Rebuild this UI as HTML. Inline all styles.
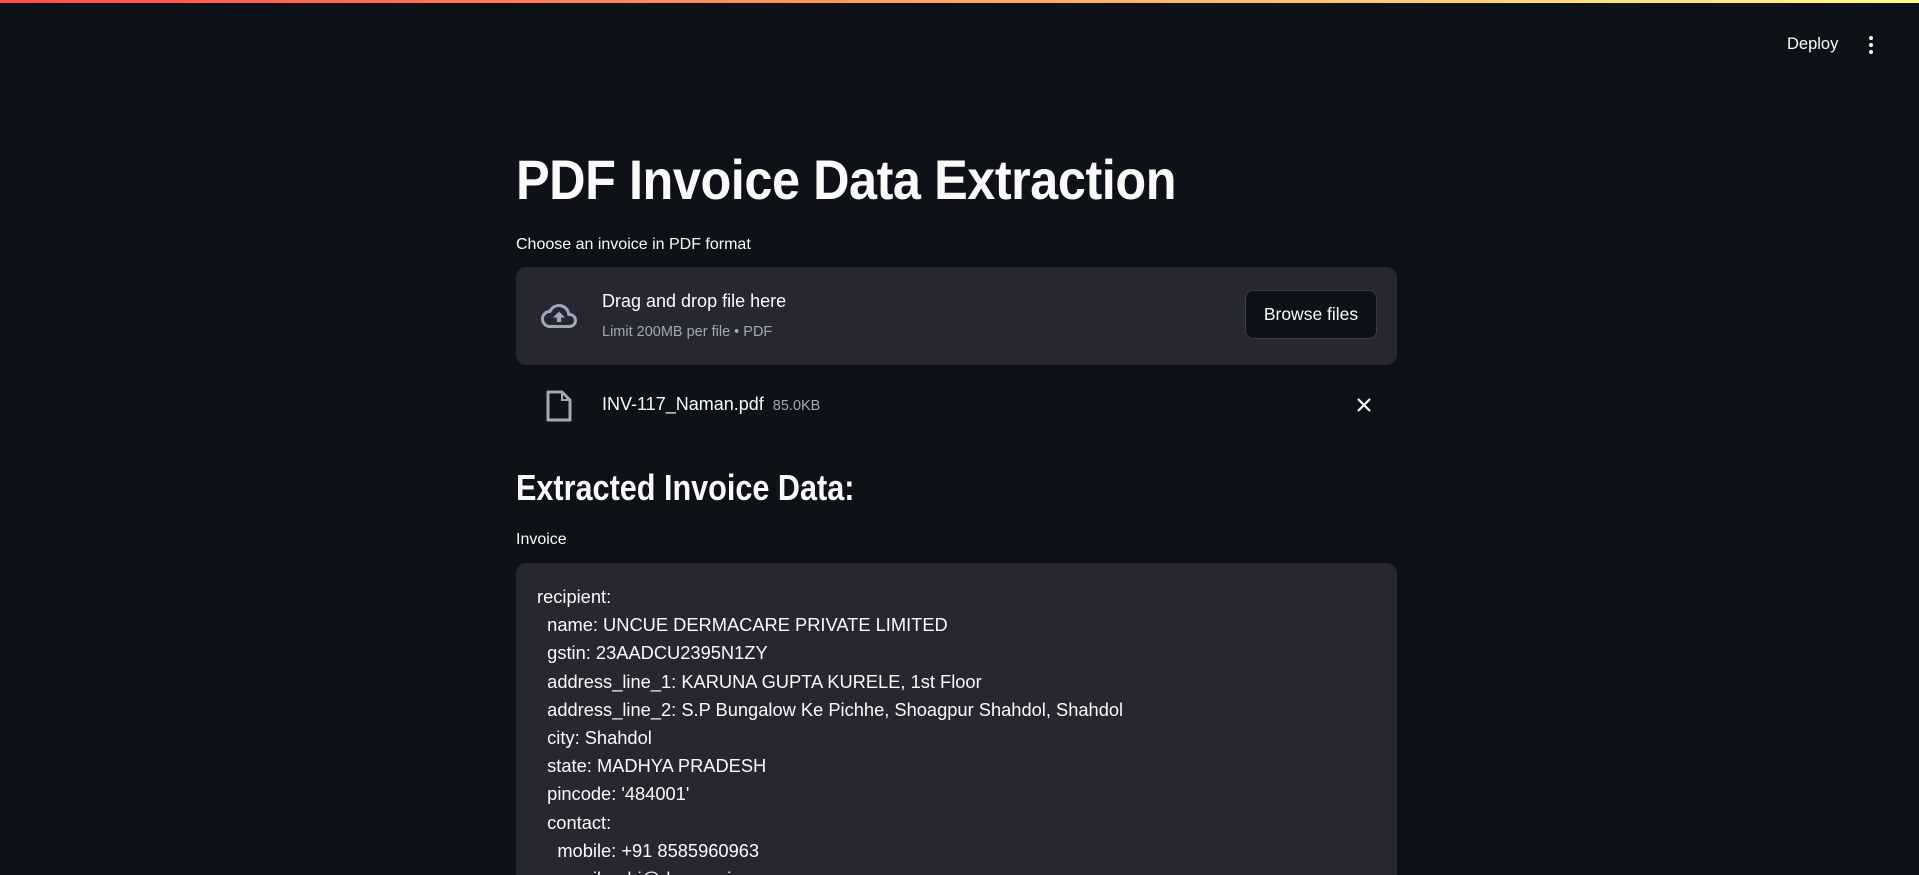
<!DOCTYPE html>
<html><head><meta charset="utf-8"><style>
html,body{margin:0;padding:0;background:#0e1117;width:1919px;height:875px;overflow:hidden;font-family:"Liberation Sans",sans-serif;color:#fafafa}
.bar{position:absolute;left:0;top:0;width:1919px;height:3px;background:linear-gradient(90deg,#ff4b4b,#fffd80)}
.abs{position:absolute;white-space:nowrap}
h1{position:absolute;left:516px;top:148px;margin:0;font-size:56px;font-weight:bold;line-height:64px;transform:scaleX(.9);transform-origin:left;letter-spacing:-.5px}
h2{position:absolute;left:516px;top:466px;margin:0;font-size:36px;font-weight:bold;line-height:44px;transform:scaleX(.85);transform-origin:left}
.box{position:absolute;left:516px;width:881px;background:#262730;border-radius:10px}
.btn{position:absolute;left:1245px;top:290px;width:132px;height:49px;border:1px solid #3b3d47;border-radius:8px;background:#0e1117;box-sizing:border-box;font-size:17.5px;line-height:47px;text-align:center}
.code{font-size:18.3px;line-height:28.2px;white-space:pre;position:absolute;left:537px;top:583px}
</style></head><body>
<div class="bar"></div>
<div class="abs" style="left:1787px;top:35px;font-size:16.5px">Deploy</div>
<svg class="abs" style="left:1862px;top:35px" width="18" height="20" viewBox="0 0 18 20"><circle cx="9" cy="3" r="2" fill="#fafafa"/><circle cx="9" cy="10" r="2" fill="#fafafa"/><circle cx="9" cy="17" r="2" fill="#fafafa"/></svg>
<h1>PDF Invoice Data Extraction</h1>
<div class="abs" style="left:516px;top:236px;font-size:16px">Choose an invoice in PDF format</div>
<div class="box" style="top:267px;height:98px"></div>
<svg class="abs" style="left:538px;top:298px" width="42" height="36" viewBox="0 0 24 24"><path d="M19.35 10.04A7.49 7.49 0 0 0 12 4C9.110 4 6.6 5.64 5.35 8.04A5.994 5.994 0 0 0 0 14c0 3.31 2.69 6 6 6h13c2.76 0 5-2.24 5-5 0-2.64-2.05-4.78-4.65-4.96zM19 18H6c-2.21 0-4-1.79-4-4 0-2.05 1.53-3.76 3.56-3.97l1.07-.11.5-.95A5.47 5.47 0 0 1 12 6c2.62 0 4.88 1.86 5.39 4.430l.3 1.5 1.53.11A2.98 2.98 0 0 1 22 15c0 1.65-1.35 3-3 3zM8 13h2.55v3h2.9v-3H16l-4-4z" fill="#a3a8b8"/></svg>
<div class="abs" style="left:602px;top:291px;font-size:18px">Drag and drop file here</div>
<div class="abs" style="left:602px;top:324px;font-size:14.5px;color:#a3a8b8">Limit 200MB per file • PDF</div>
<div class="btn">Browse files</div>
<svg class="abs" style="left:545px;top:390px" width="28" height="32" viewBox="0 0 28 32"><path d="M3 2h14l8 8v20H3z" fill="none" stroke="#a3a8b8" stroke-width="3" stroke-linejoin="round"/><path d="M17 2v8h8" fill="none" stroke="#a3a8b8" stroke-width="2"/></svg>
<div class="abs" style="left:602px;top:394px;font-size:18px">INV-117_Naman.pdf <span style="font-size:14.5px;color:#a3a8b8">&nbsp;85.0KB</span></div>
<svg class="abs" style="left:1356px;top:397px" width="16" height="16" viewBox="0 0 16 16"><path d="M2 2L14 14M14 2L2 14" stroke="#fafafa" stroke-width="2.2"/></svg>
<h2>Extracted Invoice Data:</h2>
<div class="abs" style="left:516px;top:531px;font-size:16px">Invoice</div>
<div class="box" style="top:563px;height:312px;border-radius:10px 10px 0 0"></div>
<div style="position:absolute;left:0;top:0;width:1919px;height:875px;overflow:hidden">
<div class="code">recipient:
  name: UNCUE DERMACARE PRIVATE LIMITED
  gstin: 23AADCU2395N1ZY
  address_line_1: KARUNA GUPTA KURELE, 1st Floor
  address_line_2: S.P Bungalow Ke Pichhe, Shoagpur Shahdol, Shahdol
  city: Shahdol
  state: MADHYA PRADESH
  pincode: '484001'
  contact:
    mobile: +91 8585960963
    email: rubi@dermaq.in</div>
</div>
</body></html>
